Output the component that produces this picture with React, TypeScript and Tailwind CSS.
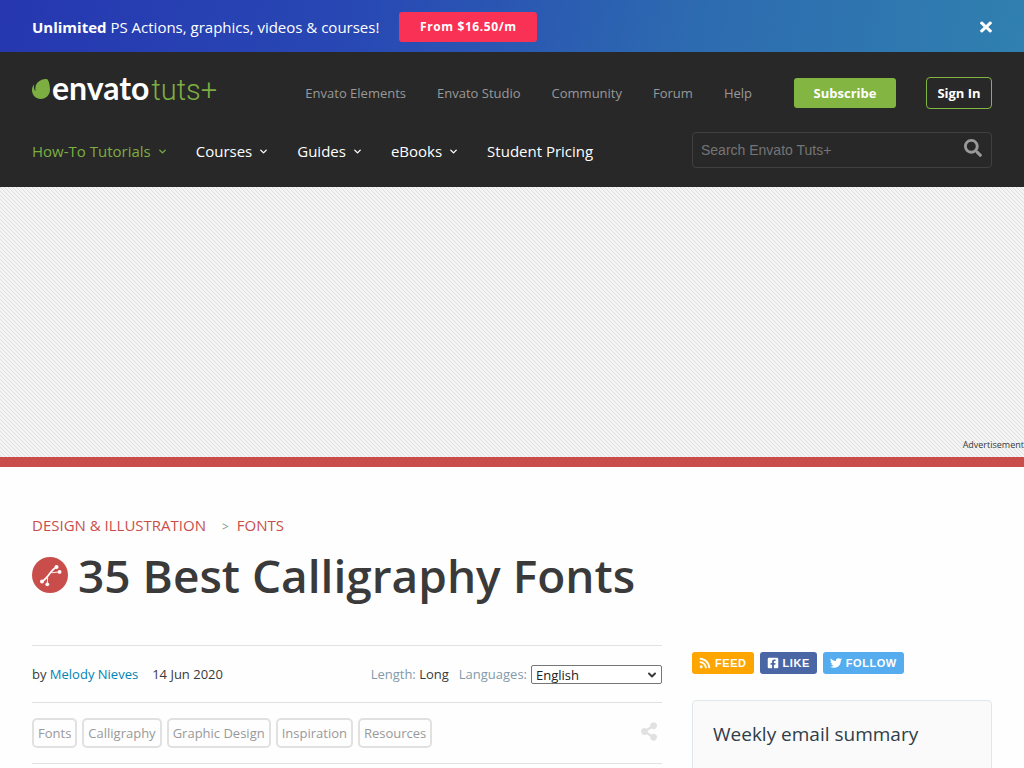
import { FaRss, FaFacebookSquare, FaTwitter, FaSearch, FaShareAlt, FaTimes } from "react-icons/fa";
import { ChevronDown } from "lucide-react";

const topLinks = ["Envato Elements", "Envato Studio", "Community", "Forum", "Help"];
const mainLinks = [
  { label: "How-To Tutorials", menu: true, active: true },
  { label: "Courses", menu: true },
  { label: "Guides", menu: true },
  { label: "eBooks", menu: true },
  { label: "Student Pricing" },
];
const tags = ["Fonts", "Calligraphy", "Graphic Design", "Inspiration", "Resources"];
const social = [
  { label: "FEED", Icon: FaRss, color: "bg-[#ffa500]" },
  { label: "LIKE", Icon: FaFacebookSquare, color: "bg-[#4a66a4]" },
  { label: "FOLLOW", Icon: FaTwitter, color: "bg-[#55acee]" },
];

function Promo() {
  return (
    <div className="flex h-[52px] items-center bg-[linear-gradient(100deg,#2637b0_0%,#2848b4_35%,#2d6bb0_68%,#3080b0_100%)] px-8 pt-[2px] text-white">
      <p className="text-[15px] leading-5">
        <strong className="font-bold">Unlimited</strong> PS Actions, graphics, videos &amp; courses!
      </p>
      <a href="#pricing" className="ml-5 flex h-[30px] w-[138px] items-center justify-center rounded-[3px] bg-[#f93154] text-xs font-bold tracking-wider">
        From $16.50/m
      </a>
      <button type="button" aria-label="Close" className="ml-auto">
        <FaTimes className="h-4 w-3" preserveAspectRatio="none" />
      </button>
    </div>
  );
}

function Logo() {
  return (
    <a href="#home" aria-label="Envato Tuts+" className="-mt-2 flex h-8 items-center">
      <svg viewBox="0 0 18 20" className="h-5 w-[18px] shrink-0" fill="#7cae42">
        <path d="M15.200.3C13.600-.5 8.600.4 5.600 3.400 3.200 5.900 3.300 9.400 3.400 11.600c0 .4-.2.4-.4.1C1.800 10.100 1.700 7.800 2.200 6c.1-.4-.2-.5-.4-.2C.6 7.300 0 9 0 11c0 5.200 3.900 9 8.700 9 5.600 0 9.300-4.300 9.300-9.200C18 6 16.600 1 15.200.3z" />
      </svg>
      <span className="ml-[2px] flex items-baseline gap-[2px] leading-8">
        <span className="font-['Lato'] text-[32px] font-bold text-white">envato</span>
        <span className="font-['Roboto'] text-[29px] font-light text-[#7cae42]">tuts+</span>
      </span>
    </a>
  );
}

function Header() {
  return (
    <header className="bg-[#282828] px-8 pt-5 pb-[19px]">
      <div className="flex h-[42px] items-center">
        <Logo />
        <nav aria-label="Envato sites" className="ml-auto flex gap-[31px] pt-[2px] text-[13px] text-[#999]">
          {topLinks.map((l) => (
            <a key={l} href="#top">{l}</a>
          ))}
        </nav>
        <a href="#subscribe" className="ml-[42px] flex h-[30px] w-[102px] items-center justify-center rounded-[3px] bg-[#82b541] pt-[2px] text-[13px] font-bold text-white">
          Subscribe
        </a>
        <a href="#signin" className="ml-[30px] flex h-8 w-[66px] items-center justify-center rounded-[4px] border border-[#82b541] pt-[2px] text-[13px] font-bold text-white">
          Sign In
        </a>
      </div>
      <div className="mt-[18px] flex h-9 items-center justify-between">
        <nav aria-label="Main" className="flex gap-7 pt-[2px] text-[15px] text-white">
          {mainLinks.map((l) => (
            <a key={l.label} href="#main" className={l.active ? "flex items-center gap-[6px] text-[#7cae42]" : "flex items-center gap-[6px]"}>
              {l.label}
              {l.menu && <ChevronDown className="size-[11px]" strokeWidth={3} />}
            </a>
          ))}
        </nav>
        <form className="flex h-9 w-[300px] items-center rounded-[4px] border border-[#404040] px-2" onSubmit={(e) => e.preventDefault()}>
          <input aria-label="Search Envato Tuts+" placeholder="Search Envato Tuts+" className="min-w-0 grow bg-transparent font-['Liberation_Sans',sans-serif] text-sm text-white outline-none placeholder:text-[#757575]" />
          <button type="submit" aria-label="Search" className="text-[#999]">
            <FaSearch className="mr-[1px] mb-1 size-[18px]" />
          </button>
        </form>
      </div>
    </header>
  );
}

function VectorBadge() {
  return (
    <svg viewBox="0 0 36 36" className="size-9 shrink-0">
      <circle cx="18" cy="18" r="18" fill="#c94e4b" />
      <path d="M10 24.500C16 21.500 18 13.500 24.500 10" fill="none" stroke="#fff" strokeWidth="1.700" />
      <path d="M15.300 27 15.600 20.500M27.500 14.900 19.500 15.800" fill="none" stroke="#fff" strokeWidth=".9" />
      <g fill="#fff">
        <circle cx="10" cy="24.500" r="2" />
        <circle cx="15.300" cy="27.300" r="1.900" />
        <circle cx="24.500" cy="10" r="2" />
        <circle cx="27.600" cy="14.900" r="1.900" />
      </g>
    </svg>
  );
}

function Article() {
  return (
    <div className="px-8 pt-[47px]">
      <nav aria-label="Breadcrumb" className="flex h-[22px] items-baseline text-[15px] text-[#c94e4b]">
        <a href="#design">DESIGN &amp; ILLUSTRATION</a>
        <span className="mr-2 ml-4 text-xs text-[#8a9a9a]">&gt;</span>
        <a href="#fonts">FONTS</a>
      </nav>
      <div className="mt-[7px] flex h-16 items-center gap-[10px]">
        <VectorBadge />
        <h1 className="text-[46px] leading-[64px] font-semibold whitespace-nowrap text-[#3a3a3a]">35 Best Calligraphy Fonts</h1>
      </div>
      <div className="mt-[38px] flex gap-[30px]">
        <main className="min-w-0 grow">
          <div className="flex h-[57px] items-center border-t border-[#e1e1e1] pt-[1px] text-[13px] text-[#3a3a3a]">
            <span>by <a href="#author" className="text-[#0084b4]">Melody Nieves</a></span>
            <time dateTime="2020-06-14" className="ml-[14px]">14 Jun 2020</time>
            <span className="ml-auto"><span className="text-[#829aaa]">Length:</span> Long</span>
            <label htmlFor="language" className="ml-[10px] text-[#829aaa]">Languages:</label>
            <span className="relative ml-1">
              <select id="language" className="block h-[19px] w-[131px] appearance-none rounded-[2px] border border-[#767676] bg-white pl-1 text-[13px] leading-4 text-[#222]">
                <option>English</option>
              </select>
              <ChevronDown className="pointer-events-none absolute top-1 right-1 size-3" strokeWidth={4} />
            </span>
          </div>
          <div className="flex h-[62px] items-center gap-[5px] border-y border-[#e1e1e1]">
            {tags.map((t) => (
              <a key={t} href="#tag" className="flex h-[30px] items-center rounded-[5px] border-2 border-[#e1e1e1] px-1 pt-[2px] text-[13px] text-[#999]">
                {t}
              </a>
            ))}
            <button type="button" aria-label="Share" className="mr-[5px] mb-1 ml-auto text-[#e1e1e1]">
              <FaShareAlt className="h-[19px] w-4" />
            </button>
          </div>
        </main>
        <aside className="w-[300px] shrink-0 pt-[7px]">
          <div className="flex gap-[6px]">
            {social.map(({ label, Icon, color }) => (
              <a key={label} href="#social" className={`flex h-[22px] items-center gap-1 rounded-[3px] px-[7px] font-['Liberation_Sans',sans-serif] text-[11px] font-bold tracking-wider text-white ${color}`}>
                <Icon className="size-3" />
                {label}
              </a>
            ))}
          </div>
          <section className="mt-[26px] h-[200px] rounded-[4px] border border-[#e1e8ed] bg-[#fafafa] px-5 pt-[19px]">
            <h2 className="text-[19px] leading-7 text-[#2f3d49]">Weekly email summary</h2>
          </section>
        </aside>
      </div>
    </div>
  );
}

export default function App() {
  return (
    <div className="h-screen overflow-hidden bg-[#fefefe] font-['Open_Sans',sans-serif]">
      <Promo />
      <Header />
      <div className="flex h-[270px] items-end justify-end bg-[#f5f5f5] bg-[linear-gradient(45deg,transparent_40%,#dedede_40%,#dedede_60%,transparent_60%)] bg-[length:4px_4px] pb-1 text-[9px] leading-4 text-[#3a3a3a]">
        Advertisement
      </div>
      <div className="h-[10px] bg-[#c94e4b]" />
      <Article />
    </div>
  );
}
